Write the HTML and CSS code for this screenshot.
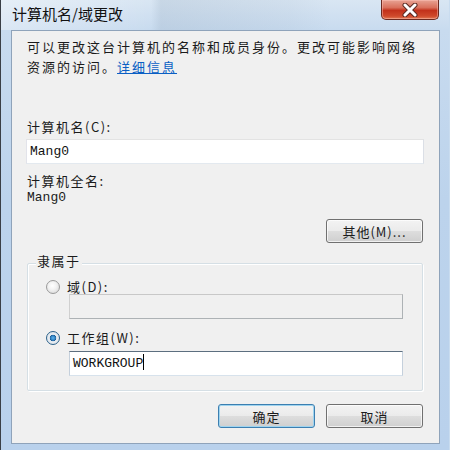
FILE: index.html
```html
<!DOCTYPE html>
<html lang="zh-CN">
<head>
<meta charset="utf-8">
<title>计算机名/域更改</title>
<link rel="stylesheet" href="styles.css">
</head>
<body>
<div class="window">
  <div class="titlebar">
    <span class="title">计算机名/域更改</span>
    <button class="close" aria-label="关闭">
      <svg width="20" height="14" viewBox="0 0 20 14">
        <path d="M5 2 L15 12 M15 2 L5 12" stroke="#5a2a22" stroke-width="5" stroke-linecap="round"/>
        <path d="M5 2 L15 12 M15 2 L5 12" stroke="#ffffff" stroke-width="3" stroke-linecap="round"/>
      </svg>
    </button>
  </div>
  <div class="content">
    <p class="intro">可以更改这台计算机的名称和成员身份。更改可能影响网络<br>资源的访问。<a class="link" href="#">详细信息</a></p>
    <div class="label first">计算机名(C):</div>
    <div class="textbox">Mang0</div>
    <div class="label full">计算机全名:</div>
    <div class="value">Mang0</div>
    <div class="row-right">
      <button class="btn">其他(M)...</button>
    </div>
    <div class="group">
      <span class="legend">隶属于</span>
      <div class="radio-row">
        <span class="radio"></span>
        <span class="radio-label">域(D):</span>
      </div>
      <div class="textbox inset disabled"></div>
      <div class="radio-row second">
        <span class="radio checked"></span>
        <span class="radio-label">工作组(W):</span>
      </div>
      <div class="textbox inset active">WORKGROUP<span class="caret"></span></div>
    </div>
    <div class="footer">
      <button class="btn default">确定</button>
      <button class="btn">取消</button>
    </div>
  </div>
</div>
</body>
</html>
```
FILE: styles.css
```css
html, body {
  margin: 0;
  padding: 0;
  background: #c9dcef;
}
.window {
  width: 450px;
  height: 450px;
  box-sizing: border-box;
  display: flex;
  flex-direction: column;
  padding: 0 9px 6px 10px;
  border-left: 2px solid #3a3f46;
  background: linear-gradient(180deg, #d9e6f3 0px, #c8dbef 30px, #bcd3ec 200px, #b9d1ec 450px);
  font-family: "Noto Sans CJK SC", "Noto Sans", sans-serif;
  color: #1b1b1b;
  margin-left: -1px;
}
.titlebar {
  height: 30px;
  display: flex;
  justify-content: space-between;
  align-items: flex-start;
  background: linear-gradient(90deg, rgba(255,255,255,0.35) 0px, rgba(255,255,255,0) 150px, rgba(150,170,190,0.25) 160px, rgba(150,170,190,0.1) 290px, rgba(255,255,255,0) 330px);
  margin: 0 -9px 0 -10px;
  padding: 0 10px 0 10px;
}
.title {
  font-size: 15px;
  line-height: 16px;
  padding-top: 6px;
  padding-left: 1px;
  color: #111;
}
.close {
  width: 58px;
  height: 20px;
  padding: 0;
  margin: 0;
  border: 1px solid #6b2a20;
  border-top: none;
  border-radius: 0 0 5px 5px;
  background: linear-gradient(180deg, #e8a394 0%, #d9705c 40%, #c2311b 55%, #cf4a2c 85%, #e27a55 100%);
  display: flex;
  align-items: center;
  justify-content: center;
  box-shadow: inset 0 0 0 1px rgba(255,200,190,0.45);
}
.content {
  flex: 1;
  background: #f0f0f0;
  border: 1px solid #8fa3ba;
  padding: 6px 16px 0 15px;
  font-size: 13px;
}
.intro {
  margin: 0;
  line-height: 20px;
  letter-spacing: 2px;
}
.link {
  color: #0a5fc4;
  text-decoration: underline;
}
.label {
  line-height: 20px;
  letter-spacing: 1.5px;
}
.label.first {
  margin-top: 40px;
}
.textbox {
  box-sizing: border-box;
  height: 25px;
  background: #ffffff;
  border: 1px solid #abadb3;
  border-top-color: #e3e3e3;
  border-left-color: #e2e3ea;
  border-right-color: #dbdfe6;
  border-bottom-color: #e3e9ef;
  font-family: "Liberation Mono", monospace;
  font-size: 13px;
  line-height: 23px;
  padding-left: 3px;
  margin: 2px -1px 0 -1px;
  color: #111;
}
.label.full {
  margin-top: 8px;
  line-height: 17px;
}
.value {
  font-family: "Liberation Mono", monospace;
  line-height: 17px;
}
.row-right {
  display: flex;
  justify-content: flex-end;
  margin-top: 13px;
}
.btn {
  box-sizing: border-box;
  width: 97px;
  height: 24px;
  padding: 0;
  border: 1px solid #707070;
  border-radius: 3px;
  background: linear-gradient(180deg, #f3f3f3 0%, #ebebeb 48%, #dddddd 52%, #cfcfcf 100%);
  box-shadow: inset 0 0 0 1px rgba(255,255,255,0.7);
  font-family: "Noto Sans CJK SC", "Noto Sans", sans-serif;
  font-size: 13px;
  letter-spacing: 1px;
  color: #1b1b1b;
}
.btn.default {
  border-color: #3c7fb1;
  box-shadow: inset 0 0 0 1px #9fd4ef;
}
.group {
  position: relative;
  margin-top: 20px;
  border: 1px solid #d5dfe5;
  box-shadow: inset 1px 1px 0 #ffffff, 1px 1px 0 #ffffff;
  border-radius: 2px;
  padding: 16px 19px 14px 18px;
}
.legend {
  position: absolute;
  left: 8px;
  top: -11px;
  padding: 0 1px;
  background: #f0f0f0;
  line-height: 16px;
  letter-spacing: 1.5px;
}
.radio-row {
  display: flex;
  align-items: center;
  height: 14px;
  gap: 7px;
}
.radio-row.second {
  margin-top: 12px;
}
.radio {
  box-sizing: border-box;
  width: 14px;
  height: 14px;
  border-radius: 50%;
  border: 1px solid #9a9a9a;
  background: radial-gradient(circle at 45% 40%, #ffffff 0%, #f2f2f2 40%, #d2d2d2 100%);
  flex: none;
}
.radio.checked {
  border-color: #2c628b;
  background: radial-gradient(circle at 50% 50%, #5fb5ea 0%, #2c7cc0 28%, #174e7d 38%, #e9eef3 42%, #d7dde4 100%);
}
.radio-label {
  line-height: 14px;
  letter-spacing: 1.5px;
}
.textbox.inset {
  margin: 0 0 0 23px;
}
.textbox.inset:first-of-type {
  margin-top: 0;
}
.textbox.disabled {
  background: #f0f0f0;
  border-color: #adb2b5;
  border-top-color: #c8c8c8;
  border-left-color: #d0d0d0;
}
.textbox.active {
  margin-top: 6px;
  border-top-color: #5c6e7f;
  border-left-color: #c5d0dc;
  border-right-color: #c5d0dc;
  border-bottom-color: #d7e2ec;
}
.caret {
  display: inline-block;
  width: 1px;
  height: 16px;
  background: #000;
  vertical-align: -3px;
}
.footer {
  display: flex;
  justify-content: flex-end;
  gap: 11px;
  margin-top: 13px;
}
```
